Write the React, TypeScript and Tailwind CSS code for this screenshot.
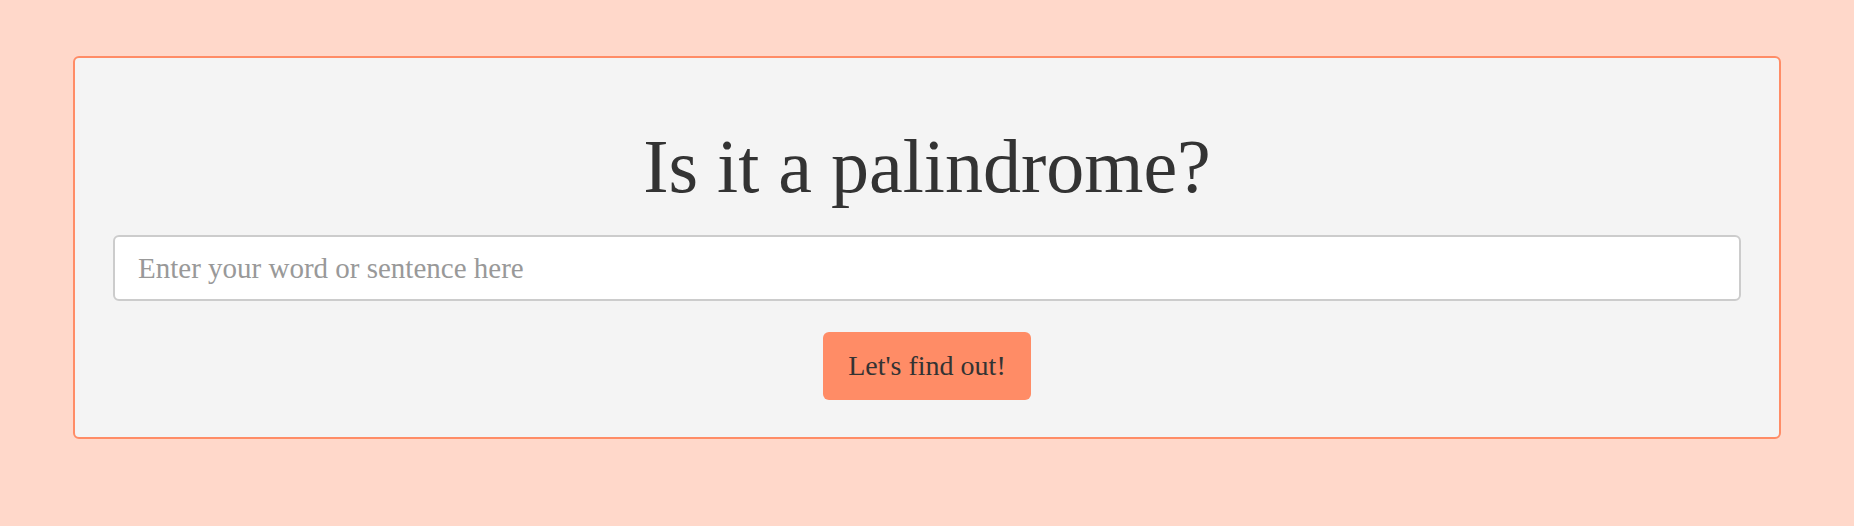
import React, {useState} from 'react';

export default function App() {
  const [text, setText] = useState('');

  return (
    <div className="min-h-[526px] bg-[#ffd8ca] px-[73px] pt-[56px] pb-[87px] font-['Liberation_Serif',serif] text-[#333]">
      <div className="rounded-[6px] border-2 border-[#ff8c66] bg-[#f4f4f4] px-[38px] pt-[70px] pb-[37px]">
        <h1 className="text-center text-[76px] leading-[76px] font-normal">Is it a palindrome?</h1>
        <div className="mt-[31px]">
          <input
            type="text"
            value={text}
            onChange={(e) => setText(e.target.value)}
            placeholder="Enter your word or sentence here"
            className="h-[66px] w-full rounded-[6px] border-2 border-[#cccccc] bg-white px-[23px] text-[29px] text-[#333] outline-none placeholder:text-[#999]"
          />
        </div>
        <div className="mt-[31px] flex justify-center">
          <button className="h-[68px] w-[208px] rounded-[6px] bg-[#ff8c66] text-[28px] text-[#333]">
            Let's find out!
          </button>
        </div>
      </div>
    </div>
  );
}
